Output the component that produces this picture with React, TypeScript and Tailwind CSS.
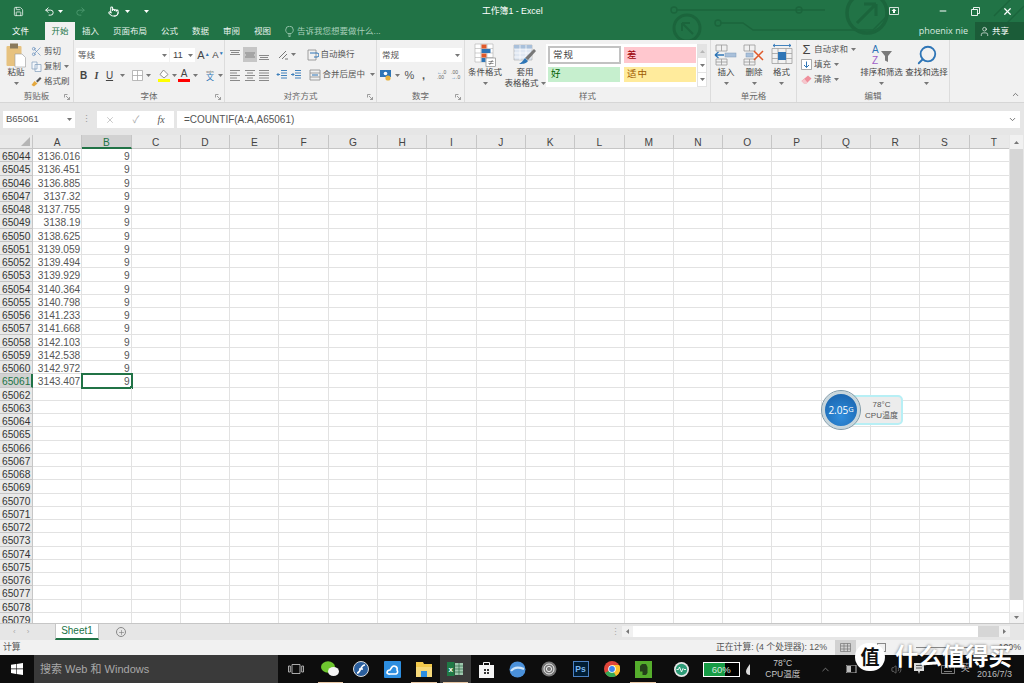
import { ReactNode } from "react";
import { ChevronDown, ChevronUp, Minus, Plus, Pointer, Redo2, Save, Scissors, Search, Undo2, User, Volume2, X } from "lucide-react";

const COLUMNS = "ABCDEFGHIJKLMNOPQRST".split("");
const VALUES = [
  "3136.016", "3136.451", "3136.885", "3137.32", "3137.755", "3138.19", "3138.625", "3139.059", "3139.494",
  "3139.929", "3140.364", "3140.798", "3141.233", "3141.668", "3142.103", "3142.538", "3142.972", "3143.407",
];
const ROWS = Array.from({ length: 36 }, (_, i) => 65044 + i);

function Caret({ className = "" }: { className?: string }) {
  return (
    <svg width="5" height="3" viewBox="0 0 5 3" className={`shrink-0 ${className}`}>
      <path d="M0 0h5L2.5 3z" fill="#777" />
    </svg>
  );
}

function Launcher() {
  return (
    <svg width="6" height="6" viewBox="0 0 6 6">
      <path d="M0.5 0.5h3M0.5 0.5v3M2 2l3.5 3.5M5.5 3v2.5H3" stroke="#888" strokeWidth="0.8" fill="none" />
    </svg>
  );
}

function RibbonGroup({ label, width, launcher, children }: { label: string; width: string; launcher?: boolean; children: ReactNode }) {
  return (
    <section className={`${width} shrink-0 h-full flex flex-col border-r border-[#dcdcdc]`}>
      <div className="flex-1 min-h-0 flex">{children}</div>
      <div className="h-[11px] flex items-center relative">
        <span className="flex-1 text-center text-[8.5px] leading-[11px] text-[#666]">{label}</span>
        {launcher && <span className="absolute right-[3px] top-[3px] flex"><Launcher /></span>}
      </div>
    </section>
  );
}

function LargeButton({ label, label2, width, icon }: { label: string; label2?: string; width: string; icon: ReactNode }) {
  return (
    <div className={`${width} shrink-0 flex flex-col items-center`}>
      <div className="h-[24px] flex items-center justify-center">{icon}</div>
      <span className="text-[8.5px] leading-[11px] text-[#444] whitespace-nowrap">{label}</span>
      {label2 ? (
        <span className="text-[8.5px] leading-[11px] text-[#444] whitespace-nowrap flex items-center gap-[2px]">{label2}<Caret /></span>
      ) : (
        <Caret className="mt-[4px]" />
      )}
    </div>
  );
}

function Lines({ rows }: { rows: [number, number, number][] }) {
  return (
    <svg width="12" height="12" viewBox="0 0 12 12">
      {rows.map(([y, a, b], i) => <path key={i} d={`M${a} ${y}H${b}`} stroke="#7d7d7d" strokeWidth="0.9" />)}
    </svg>
  );
}

const topRows: [number, number, number][] = [[1.5, 1, 11], [3.5, 2, 10], [5.5, 1, 11]];
const midRows: [number, number, number][] = [[4, 1, 11], [6, 2, 10], [8, 1, 11]];
const bottomRows: [number, number, number][] = [[6.5, 1, 11], [8.5, 2, 10], [10.5, 1, 11]];
const fullRows: [number, number, number][] = [[1.5, 1, 11], [4, 1, 11], [6.5, 1, 11], [9, 1, 11], [11.5, 1, 11]];
const leftRows: [number, number, number][] = [[1.5, 1, 11], [4, 1, 8], [6.5, 1, 11], [9, 1, 8], [11.5, 1, 11]];
const centerRows: [number, number, number][] = [[1.5, 1, 11], [4, 3, 9], [6.5, 1, 11], [9, 3, 9], [11.5, 1, 11]];

function TableGlyph({ mark }: { mark: "in" | "del" | "fmt" }) {
  return (
    <svg width="24" height="24" viewBox="0 0 24 24" fill="none">
      {mark === "fmt" ? (
        <>
          <path d="M2 5.5h20v15H2zM8 5.5v15M16 5.5v15M2 10.5h20M2 15.5h20" stroke="#a0a0a0" strokeWidth="0.8" />
          <rect x="8" y="9" width="8" height="8" fill="#2e75b6" />
          <path d="M3 2.5h18M3 2.5l2-1.5M3 2.5l2 1.5M21 2.5l-2-1.5M21 2.5l-2 1.5" stroke="#2e75b6" strokeWidth="0.9" />
        </>
      ) : (
        <>
          <path d="M2 2h11v6H2zM7.5 2v6M2 16h11v6H2zM7.5 16v6M2 19h11" stroke="#9a9a9a" strokeWidth="0.8" />
          <rect x={mark === "in" ? 11 : 4} y="10" width={mark === "in" ? 11 : 7} height="4" fill="#a9c0da" stroke="#7f9cba" strokeWidth="0.5" />
          {mark === "in" ? (
            <path d="M10 12H1M1 12l3.5-3M1 12l3.5 3" stroke="#2e75b6" strokeWidth="1.3" />
          ) : (
            <path d="M12 8l9 9M21 8l-9 9" stroke="#e0592a" strokeWidth="1.5" />
          )}
        </>
      )}
    </svg>
  );
}

function SmallRow({ icon, label, caret }: { icon: ReactNode; label: string; caret?: boolean }) {
  return (
    <div className="h-[15px] flex items-center whitespace-nowrap">
      <span className="w-[13px] flex justify-center">{icon}</span>
      <span className="ml-[1px] text-[8.5px] text-[#555]">{label}</span>
      {caret && <Caret className="ml-[3px]" />}
    </div>
  );
}

function Ribbon() {
  return (
    <div className="h-[63px] shrink-0 bg-[#f1f1f1] flex border-b border-[#d6d6d6]">
      <RibbonGroup label="剪贴板" width="w-[74px]" launcher>
        <div className="pt-[3px] pl-[4px] flex">
          <LargeButton
            width="w-[24px]"
            label="粘贴"
            icon={
              <svg width="20" height="25" viewBox="0 0 20 25" className="mt-[1px]">
                <rect x="0.5" y="3" width="15" height="20" rx="1" fill="#e7c27f" />
                <rect x="4" y="0.5" width="8" height="5" fill="#8a7a5c" />
                <path d="M9 11h7l3.5 3.5V24H9z" fill="#fff" stroke="#9a9a9a" strokeWidth="0.6" />
              </svg>
            }
          />
          <div className="ml-[2px] flex flex-col pt-[1px]">
            <SmallRow icon={<Scissors size={11} strokeWidth={1.4} color="#5b87b8" />} label="剪切" />
            <SmallRow
              label="复制"
              caret
              icon={
                <svg width="11" height="11" viewBox="0 0 11 11" fill="#f4f7fb" stroke="#7f9cba" strokeWidth="0.7">
                  <path d="M1 1h5v7H1zM4 3.5h6v7H4z" />
                </svg>
              }
            />
            <SmallRow
              label="格式刷"
              icon={
                <svg width="11" height="11" viewBox="0 0 11 11">
                  <path d="M0.5 9l3-4 3 2.5-3.5 3z" fill="#e5a93f" />
                  <path d="M5 5l4-4 1.5 1.5-4 4z" fill="#555" />
                </svg>
              }
            />
          </div>
        </div>
      </RibbonGroup>

      <RibbonGroup label="字体" width="w-[151px]" launcher>
        <div className="flex-1 pl-[2px] pt-[8px] flex flex-col">
          <div className="flex items-center h-[14px]">
            <div className="w-[93px] h-[14px] bg-white flex items-center justify-between px-[2px]">
              <span className="text-[8.5px] text-[#555]">等线</span><Caret />
            </div>
            <div className="ml-[1px] w-[25px] h-[14px] bg-white flex items-center justify-between pl-[3px] pr-[2px]">
              <span className="text-[9.5px] text-[#444]">11</span><Caret />
            </div>
            <span className="ml-[1px] w-[15px] text-center text-[11px] text-[#444]">A<sup className="text-[5px] text-[#2e75b6]">▲</sup></span>
            <span className="w-[14px] text-center text-[9.5px] text-[#444]">A<sup className="text-[5px] text-[#2e75b6]">▼</sup></span>
          </div>
          <div className="flex items-center h-[14px] mt-[6px] pl-[1px]">
            <span className="w-[13px] text-center text-[10px] font-bold text-[#444]">B</span>
            <span className="w-[13px] text-center text-[10px] italic font-bold font-['Liberation_Serif',serif] text-[#444]">I</span>
            <span className="w-[13px] text-center text-[10px] underline text-[#444]">U</span>
            <Caret className="ml-[3.5px] mr-[7px]" />
            <svg width="11" height="11" viewBox="0 0 11 11" className="mr-[3px]"><path d="M0.5 0.5h10v10h-10zM5.5 0.5v10M0.5 5.5h10" fill="#fff" stroke="#a8a8a8" strokeWidth="0.8" /></svg>
            <Caret className="mr-[7.5px]" />
            <svg width="12" height="13" viewBox="0 0 12 13" className="mr-[1.5px]">
              <path d="M5.5 1L10 5.5 6 9 2 5.5z" fill="#fff" stroke="#777" strokeWidth="0.8" />
              <rect y="10" width="12" height="3" fill="#ffff00" />
            </svg>
            <Caret className="mr-[1.5px]" />
            <div className="w-[12px] flex flex-col items-center mr-[2.5px]">
              <span className="text-[10px] leading-[10px] text-[#444]">A</span>
              <span className="w-[12px] h-[3px] bg-[#ff0000]" />
            </div>
            <Caret className="mr-[7px]" />
            <span className="w-[11px] mr-[2px] text-center text-[8px] leading-[8px] text-[#2e75b6]"><span className="block text-[4px] leading-[5px] text-[#666]">wén</span>文</span>
            <Caret />
          </div>
        </div>
      </RibbonGroup>

      <RibbonGroup label="对齐方式" width="w-[152px]" launcher>
        <div className="flex-1 pl-[3px] pt-[7px] flex flex-col">
          <div className="flex items-center h-[15px]">
            <span className="w-[14.5px] h-[15px] flex items-center justify-center"><Lines rows={topRows} /></span>
            <span className="w-[14.5px] h-[15px] flex items-center justify-center bg-[#c6c6c6]"><Lines rows={midRows} /></span>
            <span className="w-[14.5px] h-[15px] flex items-center justify-center"><Lines rows={bottomRows} /></span>
            <svg width="12" height="12" viewBox="0 0 12 12" className="ml-[5px]"><path d="M2 9l7-7M5 10l5-5M8 10h3" stroke="#777" strokeWidth="1" fill="none" /></svg>
            <Caret className="ml-[2px]" />
            <span className="ml-[11px] flex">
              <svg width="12" height="12" viewBox="0 0 12 12" fill="none"><path d="M1 1h8v10H1z" stroke="#8a8a8a" strokeWidth="0.8" /><path d="M3 4h7a1.5 1.5 0 010 4H7" stroke="#2e75b6" strokeWidth="1" /></svg>
            </span>
            <span className="ml-[2px] text-[8.5px] text-[#555] whitespace-nowrap">自动换行</span>
          </div>
          <div className="flex items-center h-[15px] mt-[5px]">
            <span className="w-[14.5px] flex justify-center"><Lines rows={leftRows} /></span>
            <span className="w-[14.5px] flex justify-center"><Lines rows={centerRows} /></span>
            <span className="w-[14.5px] flex justify-center"><Lines rows={fullRows} /></span>
            <svg width="12" height="12" viewBox="0 0 12 12" className="ml-[4px]"><path d="M5 1.5h6M5 4h6M5 6.5h6M5 9h6M1 5.5h3M1 5.5l1.5-1.5M1 5.5L2.5 7" stroke="#2e75b6" strokeWidth="0.9" fill="none" /></svg>
            <svg width="12" height="12" viewBox="0 0 12 12" className="ml-[2px]"><path d="M5 1.5h6M5 4h6M5 6.5h6M5 9h6M1 5.5h3M4 5.5L2.5 4M4 5.5L2.5 7" stroke="#2e75b6" strokeWidth="0.9" fill="none" /></svg>
            <svg width="12" height="12" viewBox="0 0 12 12" fill="none" className="ml-[7px]"><path d="M1 1h10v10H1zM1 4h10M1 8h10" stroke="#8a8a8a" strokeWidth="0.8" /><path d="M3 6h6" stroke="#2e75b6" strokeWidth="1" /></svg>
            <span className="ml-[2px] text-[8.5px] text-[#555] whitespace-nowrap">合并后居中</span>
            <Caret className="ml-[5px]" />
          </div>
        </div>
      </RibbonGroup>

      <RibbonGroup label="数字" width="w-[88px]" launcher>
        <div className="flex-1 pl-[3px] pt-[8px] flex flex-col">
          <div className="w-[82px] h-[14px] bg-white flex items-center justify-between px-[2px]">
            <span className="text-[8.5px] text-[#555]">常规</span><Caret />
          </div>
          <div className="flex items-center h-[14px] mt-[6px]">
            <svg width="12" height="12" viewBox="0 0 12 12"><rect y="1" width="11" height="7" fill="#2e75b6" /><circle cx="5.5" cy="4.5" r="1.8" fill="#fff" /><circle cx="8" cy="9" r="2.6" fill="#e5b13f" /></svg>
            <Caret className="ml-[3px]" />
            <span className="ml-[3px] w-[13px] text-center text-[11px] text-[#555]">%</span>
            <span className="ml-[1px] w-[13px] text-center text-[11px] font-bold text-[#555]">,</span>
            <span className="ml-[7px] w-[12px] text-[5px] leading-[5px] text-[#666]"><span className="text-[#2e75b6]">←</span>.0<br />.00</span>
            <span className="ml-[2px] w-[12px] text-[5px] leading-[5px] text-[#666]">.00<br /><span className="text-[#2e75b6]">→</span>.0</span>
          </div>
        </div>
      </RibbonGroup>

      <RibbonGroup label="样式" width="w-[246px]">
        <div className="flex pt-[3px] pl-[1px] w-full">
          <LargeButton
            width="w-[38px]"
            label="条件格式"
            icon={
              <svg width="22" height="24" viewBox="0 0 22 24">
                <path d="M1 1h18v18H1zM7 1v18M13 1v18M1 5.5h18M1 10h18M1 14.5h18" fill="#fff" stroke="#b0b0b0" strokeWidth="0.6" />
                <rect x="7.5" y="1.5" width="5" height="4" fill="#e0592a" />
                <rect x="7.5" y="6" width="9" height="4" fill="#2e75b6" />
                <rect x="7.5" y="10.5" width="5" height="4" fill="#e0592a" />
                <rect x="7.5" y="15" width="4" height="4" fill="#2e75b6" />
                <rect x="12" y="15" width="9.5" height="8.5" fill="#fff" stroke="#777" strokeWidth="0.6" />
                <path d="M14.5 18.5h5M14.5 20.5h5M15.5 22l3-5" stroke="#555" strokeWidth="0.6" />
              </svg>
            }
          />
          <LargeButton
            width="w-[42px]"
            label="套用"
            label2="表格格式"
            icon={
              <svg width="24" height="24" viewBox="0 0 24 24">
                <path d="M1 2h18v15H1z" fill="#dfe7f2" stroke="#a8a8a8" strokeWidth="0.6" />
                <path d="M1 2h18v4H1z" fill="#a9c0da" />
                <path d="M7 2v15M13 2v15M1 6h18M1 10h18M1 14h18" stroke="#fff" strokeWidth="0.7" />
                <path d="M21 6l2 2-8 9-3-2z" fill="#777" />
                <path d="M12 15l3 3c-2 3-6 3-9 3 2-1 4-3 6-6z" fill="#2e75b6" />
              </svg>
            }
          />
          <div className="mt-[1px] w-[161px] h-[43px] flex">
            <div className="w-[151px] h-full bg-white grid grid-cols-[75px_76px] grid-rows-[20px_21px] pt-[1px] pl-[2px]">
              <div className="w-[73px] h-[18px] mt-[1px] border-2 border-[#c2c2c2] bg-white flex items-center pl-[3px] text-[9.5px] tracking-[1px] text-[#444]">常规</div>
              <div className="w-[72px] h-[16px] mt-[2px] ml-[1px] bg-[#ffc7ce] flex items-center pl-[3px] text-[9.5px] text-[#9c0006]">差</div>
              <div className="w-[72px] h-[15px] mt-[2px] bg-[#c6efce] flex items-center pl-[3px] text-[9.5px] text-[#006100]">好</div>
              <div className="w-[72px] h-[15px] mt-[2px] ml-[1px] bg-[#ffeb9c] flex items-center pl-[3px] text-[9.5px] tracking-[1px] text-[#9c5700]">适中</div>
            </div>
            <div className="w-[10px] h-full flex flex-col">
              <div className="h-[14px] bg-[#e3e3e3] flex items-center justify-center"><Caret className="rotate-180 opacity-40" /></div>
              <div className="h-[14px] bg-white border-x border-[#e3e3e3] flex items-center justify-center"><Caret /></div>
              <div className="h-[15px] bg-white border border-[#e3e3e3] flex items-center justify-center"><Caret /></div>
            </div>
          </div>
        </div>
      </RibbonGroup>

      <RibbonGroup label="单元格" width="w-[86px]">
        <div className="flex pt-[3px] pl-[1px]">
          <LargeButton width="w-[28px]" label="插入" icon={<TableGlyph mark="in" />} />
          <LargeButton width="w-[28px]" label="删除" icon={<TableGlyph mark="del" />} />
          <LargeButton width="w-[27px]" label="格式" icon={<TableGlyph mark="fmt" />} />
        </div>
      </RibbonGroup>

      <RibbonGroup label="编辑" width="w-[153px]">
        <div className="flex pt-[2px] pl-[3px]">
          <div className="w-[59px] flex flex-col">
            <SmallRow icon={<span className="text-[13px] leading-[13px] text-[#444]">Σ</span>} label="自动求和" caret />
            <SmallRow
              label="填充"
              caret
              icon={
                <svg width="11" height="11" viewBox="0 0 11 11" fill="none"><path d="M0.5 0.5h10v10h-10z" fill="#fff" stroke="#8a8a8a" strokeWidth="0.7" /><path d="M5.5 2.5v6M3 6l2.5 2.5L8 6" stroke="#2e75b6" strokeWidth="1" /></svg>
              }
            />
            <SmallRow
              label="清除"
              caret
              icon={
                <svg width="11" height="10" viewBox="0 0 11 10"><path d="M7 0.5l3.5 3-5 5H3L0.5 6z" fill="#ef8f9c" /><path d="M0.5 6L3 8.5h2.5l1-1L3.5 4z" fill="#f5c7cd" /></svg>
              }
            />
          </div>
          <div className="flex pt-[1px]">
            <LargeButton
              width="w-[45px]"
              label="排序和筛选"
              icon={
                <svg width="22" height="23" viewBox="0 0 22 23">
                  <text x="1" y="9" fontSize="10" fontFamily="Liberation Sans" fill="#2e75b6">A</text>
                  <text x="1" y="20" fontSize="10" fontFamily="Liberation Sans" fill="#a05fc8">Z</text>
                  <path d="M10 7h11l-4 5v6l-3-1.5V12z" fill="#7a7a7a" />
                </svg>
              }
            />
            <LargeButton
              width="w-[45px]"
              label="查找和选择"
              icon={<Search size={22} strokeWidth={2} color="#2e75b6" className="-scale-x-100" />}
            />
          </div>
        </div>
      </RibbonGroup>

      <div className="flex-1 flex items-end justify-end pr-[4px] pb-[3px]">
        <ChevronUp size={9} color="#555" strokeWidth={2} />
      </div>
    </div>
  );
}

function TitleBar() {
  const tabs = ["插入", "页面布局", "公式", "数据", "审阅", "视图"];
  return (
    <header className="h-[40px] shrink-0 bg-[#217346] relative text-white">
      <svg width="354" height="40" viewBox="0 0 354 40" className="absolute right-0 top-0" fill="none" stroke="#1b653c" strokeWidth="1.4">
        <circle cx="4" cy="10" r="3" />
        <path d="M7 10h118M125 10h30" />
        <circle cx="129" cy="10" r="3" />
        <circle cx="17" cy="28" r="13" strokeWidth="3" />
        <path d="M23 34L12 23M12 23v8M12 23h8" strokeWidth="2" />
        <circle cx="48" cy="23" r="3" />
        <path d="M51 23h22l10 7h120l20-20" />
        <circle cx="197" cy="13" r="20" strokeWidth="3.5" />
        <path d="M187 23l19-19M206 4h-12M206 4v12" strokeWidth="3" />
        <path d="M320 40l34-34M340 0l-16 16" />
      </svg>
      <div className="relative h-[22px] flex items-center">
        <span className="w-[36px] flex justify-center"><Save size={11} strokeWidth={1.6} /></span>
        <span className="ml-[5px] w-[16px] flex justify-center"><Undo2 size={11} strokeWidth={2} /></span>
        <Caret className="ml-[1px] brightness-[4]" />
        <span className="ml-[9px] w-[16px] flex justify-center"><Redo2 size={11} strokeWidth={2} color="#4d9a70" /></span>
        <span className="ml-[18px] w-[14px] flex justify-center"><Pointer size={11} strokeWidth={2.2} /></span>
        <Caret className="ml-[4.5px] brightness-[4]" />
        <Caret className="ml-[14px] brightness-[4]" />
        <span className="absolute left-[482px] text-[8.8px] leading-[22px] whitespace-nowrap">工作簿1 - Excel</span>
        <div className="ml-auto flex items-center">
          <svg width="10" height="8" viewBox="0 0 10 8" className="mr-[28px]"><path d="M0.5 0.5h9v7h-9z" fill="none" stroke="#fff" strokeWidth="0.8" /><path d="M5 1.5l2.5 2.5h-5zM4 4h2v2H4z" fill="#fff" /></svg>
          <span className="w-[32px] flex justify-center"><Minus size={10} strokeWidth={2.4} /></span>
          <svg width="9" height="9" viewBox="0 0 9 9" className="mx-[11.5px]"><path d="M0.5 2.5h6v6h-6zM2.5 2.5v-2h6v6h-2" fill="none" stroke="#fff" strokeWidth="0.9" /></svg>
          <span className="w-[33px] flex justify-center"><X size={11} strokeWidth={2.6} /></span>
        </div>
      </div>
      <nav className="relative h-[18px] flex items-center text-[8.5px]">
        <span className="ml-[12px] w-[33px]">文件</span>
        <span className="w-[30px] h-[18px] bg-[#f1f1f1] text-[#217346] flex items-center justify-center">开始</span>
        {tabs.map((tab) => (
          <span key={tab} className="px-[7px] whitespace-nowrap text-[#eaf3ee]">{tab}</span>
        ))}
        <svg width="9" height="11" viewBox="0 0 9 11" fill="none" stroke="#a9d0bb" strokeWidth="0.8" className="ml-[7px]"><path d="M2.7 7.5C1 6 0.7 4.8 0.7 4a3.8 3.8 0 017.6 0c0 .8-.3 2-2 3.5zM3 9h3M3.5 10.5h2" /></svg>
        <span className="ml-[3px] text-[#a9d0bb] whitespace-nowrap">告诉我您想要做什么...</span>
        <span className="ml-auto mr-[7px] text-[9px] text-[#d9e9e0] whitespace-nowrap font-['Open_Sans',sans-serif]">phoenix nie</span>
        <div className="w-[49px] h-[18px] bg-[#1b5c38] flex items-center pl-[4px]">
          <User size={11} strokeWidth={1.4} />
          <span className="ml-[2px] text-[8.5px]">共享</span>
        </div>
      </nav>
    </header>
  );
}

function FormulaBar() {
  return (
    <div className="h-[32px] shrink-0 bg-[#e6e6e6] pt-[8px]">
      <div className="h-[17px] flex items-stretch">
        <div className="ml-[3px] w-[72px] bg-white flex items-center justify-between px-[3px] text-[9.5px] text-[#555]">
          B65061<Caret />
        </div>
        <div className="w-[22px] flex items-center justify-center text-[9px] text-[#999]">⋮</div>
        <div className="w-[77px] bg-white flex items-center text-[#a8a8a8]">
          <span className="w-[26px] flex justify-center"><X size={10} strokeWidth={1.5} /></span>
          <span className="w-[26px] text-center text-[10px]">✓</span>
          <span className="w-[24px] text-center text-[10px] italic font-['Liberation_Serif',serif] text-[#555]">fx</span>
        </div>
        <div className="ml-[3px] mr-[4px] flex-1 bg-white flex items-center justify-between pl-[7px] pr-[3px]">
          <span className="text-[10px] text-[#555]">=COUNTIF(A:A,A65061)</span>
          <ChevronDown size={9} color="#666" strokeWidth={2.4} />
        </div>
      </div>
    </div>
  );
}

function SheetRow({ row, value, active }: { row: number; value?: string; active: boolean }) {
  const cell = "border-r border-b border-[#e2e2e2]";
  return (
    <>
      <div
        className={active
          ? "bg-[#d2d2d2] border-r-2 border-r-[#217346] border-b border-b-[#c6c6c6] pl-[2px] text-[#217346] whitespace-nowrap"
          : "bg-[#e9e9e9] border-r border-b border-[#c6c6c6] pl-[2px] text-[#333] whitespace-nowrap"}
      >
        {row}
      </div>
      <div className={`${cell} text-right pr-[1px] text-[#555]`}>{value}</div>
      <div className={`${cell} text-right pr-[1px] text-[#555] relative ${active ? "outline-2 -outline-offset-1 outline-[#217346]" : ""}`}>
        {value && "9"}
        {active && <span className="absolute right-[-2px] bottom-[-2px] w-[3px] h-[3px] bg-[#217346] box-content" />}
      </div>
      {COLUMNS.slice(2).map((col) => <div key={col} className={cell} />)}
    </>
  );
}

function Sheet() {
  return (
    <div className="h-[488px] shrink-0 flex">
      <div className="flex-1 min-w-0 overflow-hidden bg-white">
        <div className="grid grid-cols-[33px_repeat(20,49.3px)] grid-rows-[14px_repeat(36,13.26px)] text-[10.2px] leading-[15px]">
          <div className="bg-[#e9e9e9] border-r border-b border-[#c6c6c6] flex items-end justify-end pr-[2px] pb-[2px]">
            <svg width="9" height="9" viewBox="0 0 9 9"><path d="M9 0v9H0z" fill="#b5b5b5" /></svg>
          </div>
          {COLUMNS.map((col) => (
            <div
              key={col}
              className={col === "B"
                ? "bg-[#d2d2d2] border-r border-[#c6c6c6] border-b-2 border-b-[#217346] text-center text-[#217346]"
                : "bg-[#e9e9e9] border-r border-b border-[#c6c6c6] text-center text-[#444]"}
            >
              {col}
            </div>
          ))}
          {ROWS.map((row, r) => (
            <SheetRow key={row} row={row} value={VALUES[r]} active={r === 17} />
          ))}
        </div>
      </div>
      <aside className="w-[15px] shrink-0 bg-[#e6e6e6] pl-[1px] pr-[1px] flex flex-col">
        <div className="h-[14px] bg-[#f1f1f1] flex items-center justify-center"><Caret className="rotate-180" /></div>
        <div className="flex-1 bg-[#d6d6d6]" />
        <div className="h-[12px] bg-white" />
        <div className="h-[11px] bg-[#f1f1f1] flex items-center justify-center"><Caret /></div>
      </aside>
    </div>
  );
}

function SheetTabs() {
  return (
    <div className="h-[17px] shrink-0 bg-[#e6e6e6] border-t border-[#c6c6c6] flex">
      <span className="w-[55px] flex items-center pl-[13px] gap-[11px] text-[8px] text-[#aaa]"><span>‹</span><span>›</span></span>
      <div className="w-[44px] h-[16px] bg-white border-x border-[#c6c6c6] border-b-2 border-b-[#217346] text-center text-[10px] leading-[14px] text-[#217346]">Sheet1</div>
      <span className="ml-[17px] mt-[3px] w-[10px] h-[10px] rounded-full border border-[#888] flex items-center justify-center"><Plus size={7} color="#777" strokeWidth={2} /></span>
      <span className="ml-[485px] mt-[2px] text-[9px] text-[#aaa]">⋮</span>
      <div className="ml-auto mr-[14px] mt-[2px] h-[11px] w-[388px] flex">
        <span className="w-[11px] bg-[#f1f1f1] flex items-center justify-center"><Caret className="rotate-90" /></span>
        <span className="w-[345px] bg-white" />
        <span className="flex-1 bg-[#d6d6d6]" />
        <span className="w-[11px] bg-[#f1f1f1] flex items-center justify-center"><Caret className="-rotate-90" /></span>
      </div>
    </div>
  );
}

function StatusBar() {
  return (
    <div className="h-[15px] shrink-0 bg-[#f1f1f1] flex items-center text-[8.8px] text-[#555] whitespace-nowrap">
      <span className="ml-[3px] w-[18px] shrink-0">计算</span>
      <span className="ml-[695px] w-[108px] shrink-0">正在计算: (4 个处理器): 12%</span>
      <span className="ml-[11px] w-[21px] h-[15px] shrink-0 bg-[#d2d2d2] flex items-center justify-center">
        <svg width="11" height="9" viewBox="0 0 11 9"><path d="M.5.5h10v8H.5zM4 .5v8M7.5.5v8M.5 3h10M.5 6h10" fill="none" stroke="#777" strokeWidth="0.7" /></svg>
      </span>
      <span className="ml-[21px] w-[9px] h-[9px] shrink-0 border border-[#888]" />
      <span className="ml-[30px] w-[60px] h-px shrink-0 bg-[#888]" />
      <span className="ml-auto mr-[3px]">100%</span>
    </div>
  );
}

function TaskIcon({ children, active, open }: { children: ReactNode; active?: boolean; open?: boolean }) {
  return (
    <div className={`w-[31.3px] h-full shrink-0 flex items-center justify-center relative ${active ? "bg-[#3a3a3a]" : ""}`}>
      {children}
      {open && <span className="absolute left-[3px] right-[3px] bottom-0 h-[1.5px] bg-[#e6c6a4]" />}
    </div>
  );
}

function Taskbar() {
  return (
    <footer className="h-[28px] shrink-0 bg-[#0d0d0d] flex items-stretch relative">
      <div className="w-[34px] flex items-center justify-center">
        <svg width="12" height="12" viewBox="0 0 12 12" fill="#fff"><path d="M0 1.8L5 1v4.6H0zM5.6 1L12 0v5.6H5.6zM0 6.2h5v4.7l-5-.8zM5.6 6.2H12V12l-6.4-1z" /></svg>
      </div>
      <div className="w-[244px] bg-[#3a3a3a] flex items-center pl-[6px] text-[11px] text-[#a8a8a8] whitespace-nowrap">搜索 Web 和 Windows</div>
      <div className="w-[36.5px] flex items-center justify-center">
        <svg width="16" height="10" viewBox="0 0 16 10" fill="none" stroke="#bbb" strokeWidth="0.9"><path d="M4 .5h8v9H4zM.5 2h1.8v6H.5zM13.7 2h1.8v6h-1.8z" /></svg>
      </div>
      <TaskIcon open>
        <svg width="18" height="16" viewBox="0 0 18 16"><ellipse cx="7" cy="6" rx="7" ry="5.8" fill="#6ec62f" /><ellipse cx="12.5" cy="10.5" rx="5.5" ry="4.6" fill="#f4f4f4" /></svg>
      </TaskIcon>
      <TaskIcon>
        <svg width="16" height="16" viewBox="0 0 16 16"><circle cx="8" cy="8" r="7.5" fill="#2b5f9e" stroke="#ddd" /><path d="M4 12c4 0 3-8 8-8M6 8h4" stroke="#fff" strokeWidth="1.6" fill="none" /></svg>
      </TaskIcon>
      <TaskIcon>
        <svg width="17" height="17" viewBox="0 0 17 17"><rect width="17" height="17" rx="1" fill="#2d8ee0" /><path d="M3 12a3 3 0 013-3l2-3a3 3 0 015 3 2.5 2.5 0 01-1 4H6a3 3 0 01-3-1z" fill="none" stroke="#fff" strokeWidth="1.6" /></svg>
      </TaskIcon>
      <TaskIcon open>
        <svg width="16" height="15" viewBox="0 0 16 15"><path d="M0 0h7l1 2h8v13H0z" fill="#f2c94c" /><rect x="0" y="5" width="16" height="10" fill="#f6d97a" /><rect x="5" y="9" width="6" height="6" fill="#2d8ee0" /></svg>
      </TaskIcon>
      <TaskIcon active open>
        <svg width="16" height="14" viewBox="0 0 16 14"><rect width="7.5" height="14" fill="#1f7a45" /><rect x="8" y="1" width="8" height="12" fill="#9fc8ae" /><path d="M8 4h8M8 7h8M8 10h8M12 1v12" stroke="#1f5c38" strokeWidth="0.6" /><text x="1.4" y="10" fontSize="8" fontWeight="700" fontFamily="Liberation Sans" fill="#fff">x</text></svg>
      </TaskIcon>
      <TaskIcon>
        <svg width="15" height="17" viewBox="0 0 15 17"><path d="M0 4h15v13H0z" fill="#f4f4f4" /><path d="M4.5 4V1.5h6V4" stroke="#f4f4f4" fill="none" /><path d="M5 8h2v2H5zM8 8h2v2H8zM5 11h2v2H5zM8 11h2v2H8z" fill="#333" /></svg>
      </TaskIcon>
      <TaskIcon>
        <svg width="17" height="17" viewBox="0 0 17 17"><circle cx="8.5" cy="8.5" r="8" fill="#4a90d9" /><path d="M2 10c3-4 8-4 13-2" stroke="#cfe5f8" strokeWidth="2" fill="none" /></svg>
      </TaskIcon>
      <TaskIcon>
        <svg width="16" height="16" viewBox="0 0 16 16" fill="none"><circle cx="8" cy="8" r="7.5" fill="#777" /><circle cx="8" cy="8" r="5" stroke="#eee" /><circle cx="8" cy="8" r="2.6" stroke="#eee" /></svg>
      </TaskIcon>
      <TaskIcon>
        <div className="w-[16px] h-[16px] bg-[#001d34] border border-[#4a7fc0] flex items-center justify-center text-[8.5px] font-bold text-[#7cb6ee]">Ps</div>
      </TaskIcon>
      <TaskIcon>
        <svg width="16" height="16" viewBox="0 0 16 16"><circle cx="8" cy="8" r="8" fill="#e0453a" /><path d="M8 8L1 12a8 8 0 0011.5 2.7z" fill="#33a853" /><path d="M8 4h7.2A8 8 0 0112 15L8 8z" fill="#fbc02d" /><circle cx="8" cy="8" r="3.8" fill="#fff" /><circle cx="8" cy="8" r="2.9" fill="#3b84f0" /></svg>
      </TaskIcon>
      <TaskIcon open>
        <div className="w-[17px] h-[17px] bg-[#55ad2c] flex items-center justify-center">
          <svg width="9" height="11" viewBox="0 0 9 11"><path d="M1 2l2-2h4l1.5 3v6L7 11H3.5V7.5H1z" fill="#24401a" /></svg>
        </div>
      </TaskIcon>
      <div className="w-[30px] flex items-center justify-end">
        <svg width="15" height="15" viewBox="0 0 15 15"><circle cx="7.5" cy="7.5" r="7.5" fill="#e8e8e8" /><circle cx="7.5" cy="7.5" r="5.8" fill="#2e9c78" /><path d="M2.5 7.5h2l1-2.5 2 5 1.5-3.5 1 1h2" stroke="#fff" fill="none" strokeWidth="0.9" /></svg>
      </div>
      <div className="ml-[14px] flex items-center">
        <div className="w-[37px] h-[15px] border border-white bg-black flex relative">
          <div className="w-[21px] bg-[#169b45]" />
          <span className="absolute left-[8px] top-0 text-[9.5px] leading-[13px] text-[#d8e8dd]">60%</span>
        </div>
      </div>
      <div className="ml-[6px] flex items-center">
        <svg width="5" height="11" viewBox="0 0 5 11"><path d="M4 0C2 3 0 5 0 7.5S2 11 4 11z" fill="#ddd" /></svg>
      </div>
      <div className="ml-[9px] w-[46px] flex flex-col items-center justify-center text-[8.5px] leading-[11px] text-[#c8c8c8] whitespace-nowrap">
        <span>78°C</span>
        <span>CPU温度</span>
      </div>
      <div className="ml-[14px] flex items-center"><ChevronUp size={11} color="#aaa" strokeWidth={1.4} /></div>
      <div className="ml-[15px] flex items-center">
        <svg width="12" height="8" viewBox="0 0 12 8"><path d="M0 0h10v8H0z" fill="none" stroke="#bbb" /><rect x="1" y="1" width="4" height="6" fill="#bbb" /></svg>
      </div>
      <div className="ml-[33px] flex items-center"><Volume2 size={11} color="#999" strokeWidth={1.3} /></div>
      <div className="ml-[12px] flex items-center">
        <svg width="10" height="12" viewBox="0 0 10 12"><path d="M0 0h10v8H6l-1 3-1-3H0z" fill="#ddd" /><path d="M2 2.5h6M2 5h6" stroke="#333" strokeWidth="0.8" /></svg>
      </div>
      <div className="ml-[17px] flex items-center">
        <svg width="14" height="9" viewBox="0 0 14 9" fill="none" stroke="#999" strokeWidth="0.8"><path d="M.5.5h13v8H.5zM3 6.5h8M3 3h1M6 3h1M9 3h1" /></svg>
      </div>
      <span className="ml-[6px] self-center text-[9px] text-[#bbb]">英</span>
      <div className="ml-auto mr-[12px] flex flex-col justify-end pb-[3px] text-[9px] leading-[11px] text-[#bbb]">2016/7/3</div>
    </footer>
  );
}

function Watermark() {
  return (
    <div className="absolute left-[855px] top-[643px] flex items-center">
      <span className="w-[30px] h-[28px] rounded-full bg-white flex items-center justify-center text-[19px] leading-none font-bold text-[#111]">值</span>
      <span className="ml-[10px] text-[23.4px] leading-[28px] font-bold text-white whitespace-nowrap [text-shadow:0_0_3px_rgba(0,0,0,0.55)]">什么值得买</span>
    </div>
  );
}

function CpuGadget() {
  return (
    <div className="absolute left-[822px] top-[391px] flex items-center">
      <div className="z-10 w-[38px] h-[38px] rounded-full bg-[radial-gradient(circle_at_50%_70%,#2f8ddc,#175fa8)] border-[3px] border-[#c8d6dc] outline outline-1 outline-[#7f9aa8] flex items-center justify-center text-[10px] text-white font-['Open_Sans',sans-serif]">
        2.05<span className="text-[7.5px]">G</span>
      </div>
      <div className="-ml-[18px] w-[61px] h-[30px] pl-[18px] rounded-r-[5px] bg-[#ececec] border-2 border-[#b7eff5] flex flex-col items-center justify-center text-[8px] leading-[11px] text-[#555]">
        <span>78°C</span>
        <span className="whitespace-nowrap">CPU温度</span>
      </div>
    </div>
  );
}

export default function App() {
  return (
    <div className="w-[1024px] h-[683px] overflow-hidden relative flex flex-col font-['Liberation_Sans','Noto_Sans_CJK_SC',sans-serif]">
      <TitleBar />
      <Ribbon />
      <FormulaBar />
      <Sheet />
      <SheetTabs />
      <StatusBar />
      <Taskbar />
      <CpuGadget />
      <Watermark />
    </div>
  );
}
